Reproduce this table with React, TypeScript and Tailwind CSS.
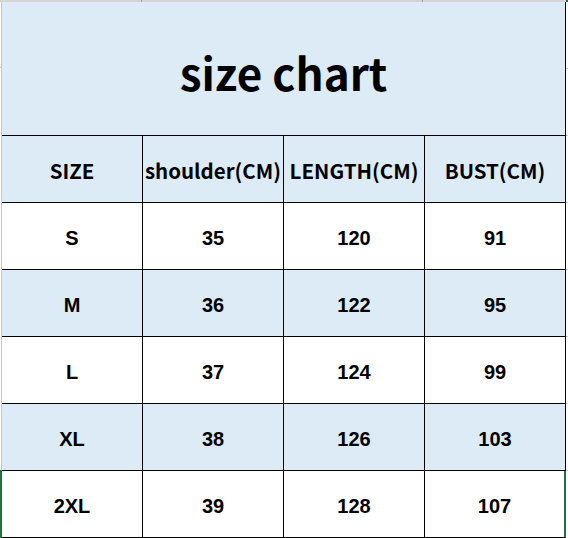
import React from 'react'

const rows = [
  { size: 'S', shoulder: '35', length: '120', bust: '91', shaded: false },
  { size: 'M', shoulder: '36', length: '122', bust: '95', shaded: true },
  { size: 'L', shoulder: '37', length: '124', bust: '99', shaded: false },
  { size: 'XL', shoulder: '38', length: '126', bust: '103', shaded: true },
  { size: '2XL', shoulder: '39', length: '128', bust: '107', shaded: false },
]

const headers = ['SIZE', 'shoulder(CM)', 'LENGTH(CM)', 'BUST(CM)']

const headFont = "font-['Microsoft_YaHei','Noto_Sans_CJK_SC',sans-serif]"
const bodyFont = "font-['Liberation_Sans',Arial,sans-serif]"

// gutter segments between excel gridline stubs
const segments = [67, 67, 67, 67, 67, 67, 67]

const App: React.FC = () => {
  return (
    <div className="w-[568px] h-[538px] bg-white overflow-hidden">
      <div className="h-[2px] bg-[#d4d4d4] flex">
        <div className="w-[142px] border-r border-[#a6a6a6]" />
        <div className="w-[281px] border-r border-[#a6a6a6]" />
        <div className="flex-1" />
        <div className="w-[2px] bg-[#217346]" />
      </div>
      <div className="flex">
        <div className="w-[2px] flex flex-col">
          <div className="h-[66px] border-r border-b border-[#c6c6c6]" />
          <div className="h-[402px] border-r border-[#c6c6c6]" />
          <div className="flex-1 bg-[#217346]" />
        </div>
        <div className="w-[564px] text-black">
          <div className="h-[134px] bg-[#ddebf7] border-r border-b border-black flex items-center justify-center">
            <span className={`${headFont} font-bold text-[44px] leading-none pt-[6px]`}>size chart</span>
          </div>
          <div className="grid grid-cols-[141px_141px_141px_141px]">
            {headers.map((h) => (
              <div
                key={h}
                className={`h-[67px] bg-[#ddebf7] border-r border-b border-black flex items-center justify-center ${headFont} font-bold text-[20.5px] pt-[2px]`}
              >
                {h}
              </div>
            ))}
            {rows.map((r, ri) =>
              [r.size, r.shoulder, r.length, r.bust].map((v, i) => (
                <div
                  key={r.size + i}
                  className={`h-[67px] border-b border-black flex items-center justify-center ${bodyFont} font-bold text-[20px] pt-[3px] ${
                    r.shaded ? 'bg-[#ddebf7]' : 'bg-white'
                  } ${ri === rows.length - 1 && i === 3 ? 'border-r-2 border-r-[#217346]' : 'border-r'}`}
                >
                  {v}
                </div>
              ))
            )}
          </div>
        </div>
        <div className="w-[2px] flex flex-col">
          {segments.map((h, i) => (
            <div key={i} className="border-b border-[#c6c6c6]" style={{ height: h }} />
          ))}
        </div>
      </div>
    </div>
  )
}

export default App
